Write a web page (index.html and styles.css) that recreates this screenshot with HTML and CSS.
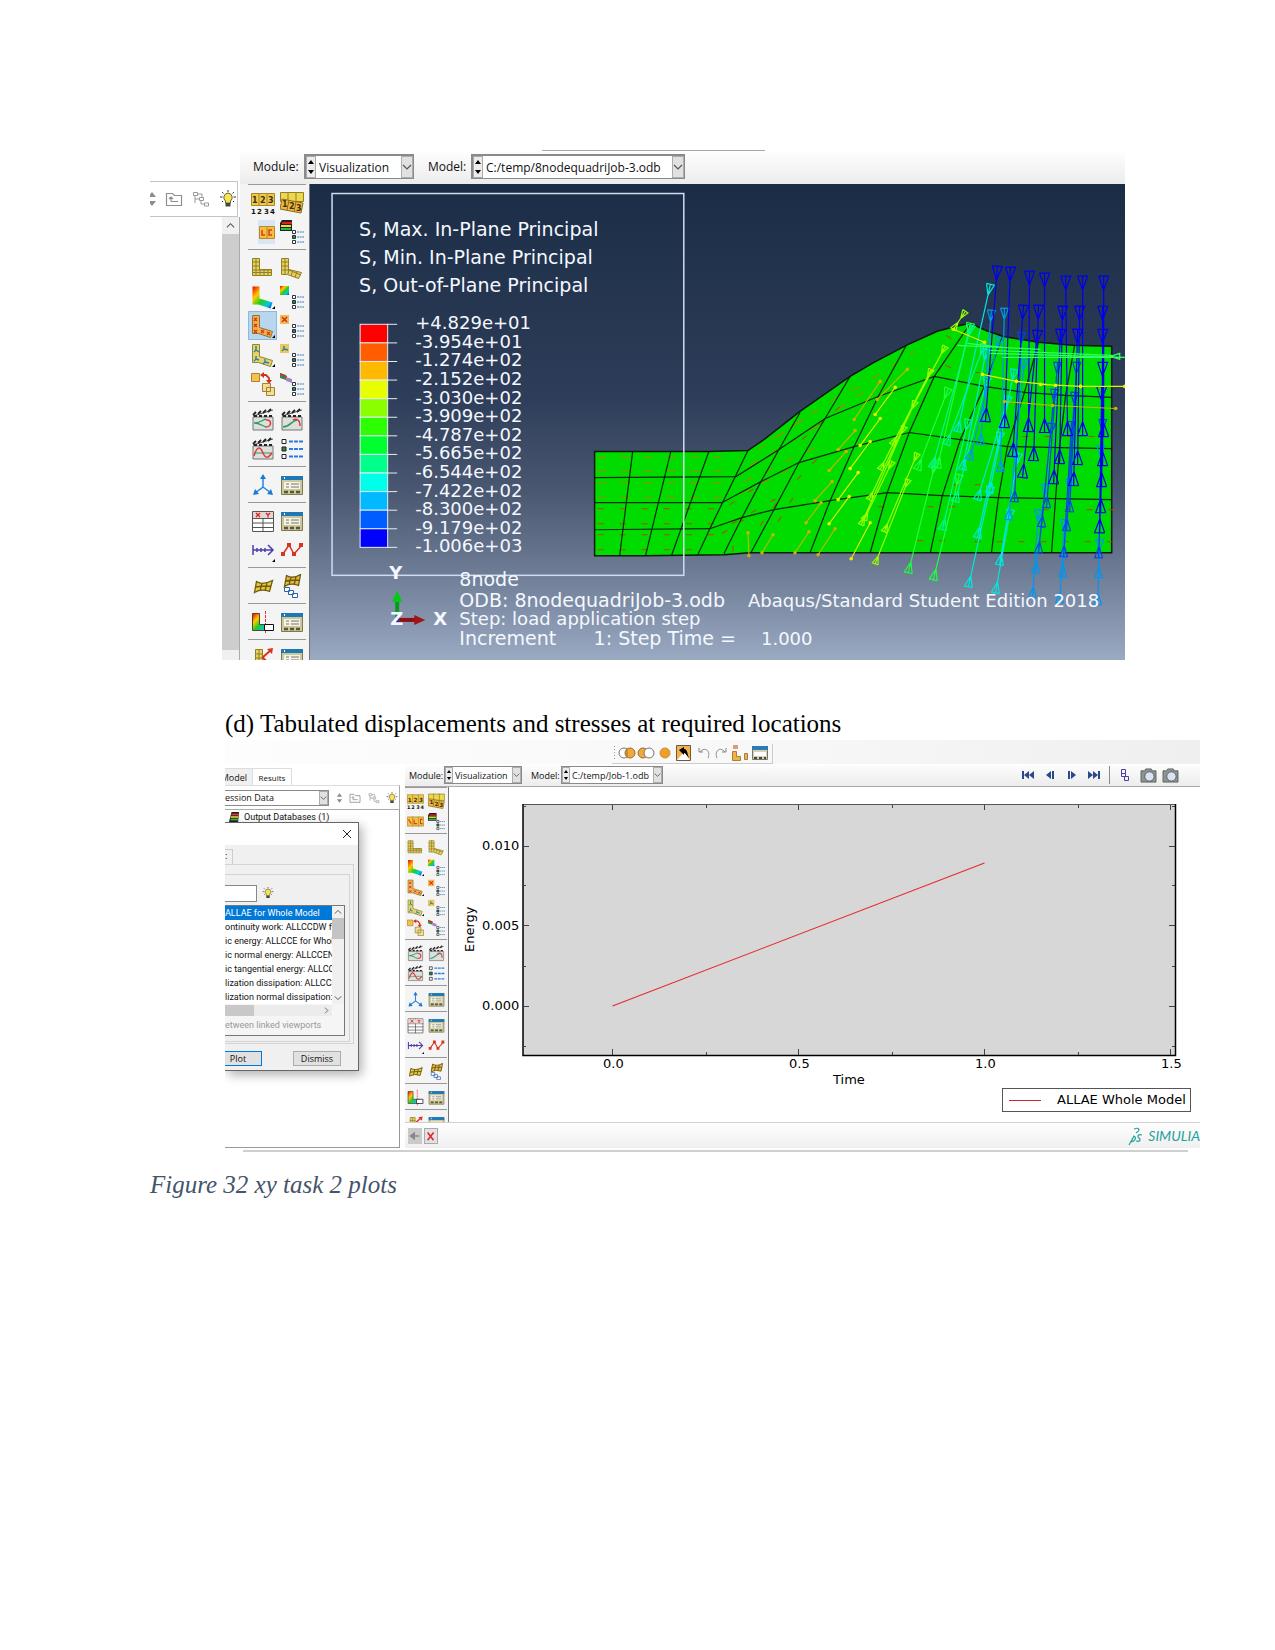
FILE: index.html
```html
<!DOCTYPE html>
<html lang="en">
<head>
<meta charset="utf-8">
<title>Figure 32 xy task 2 plots</title>
<link rel="stylesheet" href="styles.css">
</head>
<body>
<svg class="sprite" aria-hidden="true">
  <defs>
    <g id="checks">
      <path d="M12.500 10.500h3v3h-3zM12.500 20.500h3v3h-3z" fill="#fff" stroke="#333"/>
      <path d="M12.500 15.500h3v3h-3z" fill="#2a8a3a" stroke="#234"/>
      <path d="M17 12h7M17 17h7M17 22h7" stroke="#3a7ac0" stroke-dasharray="2 .6"/>
    </g>
    <path id="ell" d="M1.500 1.500h7v12l13 4-2 6-12-4h-6z"/>
    <g id="slate">
      <path d="M2 9h20v13H2z" fill="#dcdfdb" stroke="#777"/>
      <path d="M2 8l20-6" stroke="#555" stroke-width="1"/>
      <path d="M2 7l3-3M7 6l3-3M12 5l3-3M17 4l3-3M3 8h3M8 8h3M13 8h3M18 8h3" stroke="#222" stroke-width="1.800"/>
    </g>
  </defs>
  <symbol id="i-num" viewBox="0 0 24 24"><path d="M.5 2.500h23v12H.5zM8 2v13M16 2v13" fill="#f0c94a" stroke="#a8862a"/><g class="glyph"><text x="1" y="12">1</text><text x="9" y="12">2</text><text x="17" y="12">3</text></g><g class="glyph tiny"><text x="0" y="23">1</text><text x="6" y="23">2</text><text x="13" y="23">3</text><text x="19" y="23">4</text></g></symbol>
  <symbol id="i-num2" viewBox="0 0 24 24"><path d="M.5 1.500h23v9H.5zM8 1v10M16 1v10" fill="#ecd850" stroke="#94801f"/><path d="M2 8l21 4-2 10L0 18zM9 9l-2 10M16 11l-2 10" fill="#eeb93c" stroke="#8f6c1c"/><g class="glyph"><text x="2" y="16">1</text><text x="9" y="18">2</text><text x="16" y="20">3</text></g></symbol>
  <symbol id="i-lc" viewBox="0 0 24 24"><path class="halo" d="M7 0h17v24H7z"/><path d="M8.500 6.500h15v12h-15zM16 6v13" fill="#f8bd3c" stroke="#b9892c"/><path d="M11 10v5h3M21 10h-3v5h3" fill="none" stroke="#d8401c" stroke-width="1.500"/></symbol>
  <symbol id="i-slc" viewBox="0 0 24 24"><path d="M.5 5.500h23v13H.5zM8 5v14M16 5v14" fill="#f3c244" stroke="#a8862a"/><path d="M2 9l4 6M10 9v6h4M22 9h-3v6h3" fill="none" stroke="#d8401c" stroke-width="1.500"/></symbol>
  <symbol id="i-layers" viewBox="0 0 24 24"><path d="M2 0h10v11H0V3z" fill="#222"/><path d="M2 3h10" stroke="#d22" stroke-width="2"/><path d="M1 6h10" stroke="#ed3" stroke-width="2"/><path d="M1 9h10" stroke="#2b4" stroke-width="2"/><use href="#checks"/></symbol>
  <symbol id="i-mesh" viewBox="0 0 24 24"><path d="M1.500 2.500h7v11h12v6h-19zM5 2v17M1 6h8M1 10h8M1 14h20M1 16.500h20M9 13v6M13 13v6M17 13v6" fill="#e8d25c" stroke="#8f7e2b"/></symbol>
  <symbol id="i-mesh2" viewBox="0 0 24 24"><path d="M1.500 2.500h7v11l13 3-3 6-11-4h-6zM5 2v16M1 6h8M1 10h8M1 14h8l12 5M9 13l-1 5M13 14l-2 6M17 16l-2 5" fill="#e8d25c" stroke="#8f7e2b"/></symbol>
  <symbol id="i-contour" viewBox="0 0 24 24"><use href="#ell" fill="url(#rainbow)"/><path d="M24 21v3h-3z"/></symbol>
  <symbol id="i-contouro" viewBox="0 0 24 24"><path d="M0 1h9v9H0z" fill="url(#rainbow)"/><use href="#checks"/></symbol>
  <symbol id="i-sym" viewBox="0 0 24 24"><use href="#ell" fill="#f2b24a" stroke="#8f7430"/><path d="M3 4l3 3M6 4L3 7M3 10l3 3M6 10l-3 3M3 16l3 3M6 16l-3 3M10 16l3 3M13 16l-3 3M16 18l3 3M19 18l-3 3" stroke="#d3321a" stroke-width="1.300"/><path d="M24 21v3h-3z"/></symbol>
  <symbol id="i-symo" viewBox="0 0 24 24"><path d="M0 1h9v9H0z" fill="#f0bd55"/><path d="M2 3l5 5M7 3L2 8" stroke="#d3321a" stroke-width="1.600"/><use href="#checks"/></symbol>
  <symbol id="i-mat" viewBox="0 0 24 24"><use href="#ell" fill="#e3d465" stroke="#8f8440"/><path d="M5 3v4l-2 2M5 7l3 2M5 13v3l-2 2M5 16l3 1M14 16v3l-2 2M14 19l4 1" fill="none" stroke="#2f7fa8" stroke-width="1.400"/><path d="M24 21v3h-3z"/></symbol>
  <symbol id="i-mato" viewBox="0 0 24 24"><path d="M0 1h9v9H0z" fill="#ecc75a"/><path d="M4 3v3L2 8M4 6l4 1" fill="none" stroke="#2f7fa8" stroke-width="1.400"/><use href="#checks"/></symbol>
  <symbol id="i-copy" viewBox="0 0 24 24"><path d="M.5 1.500h8v8h-8z" fill="#f3c14c" stroke="#a8833a"/><path d="M10 3h5l3 3v3" fill="none" stroke="#d3321a" stroke-width="1.800"/><path d="M13 0v6l-4-3zM15 8h6l-3 4z" fill="#d3321a"/><path d="M11.500 11.500h8v8h-8zM15.500 15.500h8v8h-8z" fill="#f5dc8f" stroke="#9c8240"/></symbol>
  <symbol id="i-copyo" viewBox="0 0 24 24"><path d="M0 1l6 2v5l-6-2z" fill="#2c8a4c"/><path d="M0 1l7 3v2L0 3z" fill="#c33"/><path d="M6 5l6 2v4l-6-2z" fill="#a585c9"/><use href="#checks"/></symbol>
  <symbol id="i-clap1" viewBox="0 0 24 24"><use href="#slate"/><path d="M3 15c6 0 8-3 12-4M3 15c6 0 8 3 12 4" stroke="#2e9a62" fill="none" stroke-width="1.300"/><path d="M15 12c6-1 6 7 0 7" stroke="#dd3a3a" fill="none" stroke-width="1.500"/></symbol>
  <symbol id="i-clap2" viewBox="0 0 24 24"><use href="#slate"/><path d="M3 19c7 0 8-6 14-7" stroke="#2e9a62" fill="none" stroke-width="1.500"/><path d="M13 12c4-2 7 0 7 6" stroke="#dd3a3a" fill="none" stroke-width="1.500"/></symbol>
  <symbol id="i-clap3" viewBox="0 0 24 24"><use href="#slate"/><path d="M3 16h18" stroke="#2e9a62"/><path d="M3 19c3-10 6-10 9-3s6 4 9 0" stroke="#dd3a3a" fill="none" stroke-width="1.500"/></symbol>
  <symbol id="i-opts" viewBox="0 0 24 24"><path d="M2 2.500h4v4H2zM2 17.500h4v4H2z" fill="#fff" stroke="#222"/><path d="M2 10h4v4H2z" fill="#2a8a3a" stroke="#222"/><path d="M9 4.500h14M9 12h14M9 19.500h14" stroke="#2b7be0" stroke-width="1.800" stroke-dasharray="4 1"/></symbol>
  <symbol id="i-axes" viewBox="0 0 24 24"><path d="M12 4v10L4 20M12 14l8 6" fill="none" stroke="#2a86dc" stroke-width="1.500"/><path d="M12 1l3 5H9zM2 22l2-6 4 5zM22 22l-6-1 4-5z" fill="#1f78d4"/></symbol>
  <symbol id="i-win" viewBox="0 0 24 24"><path d="M1.500 3.500h21v18h-21z" fill="#cfc79c" stroke="#7d7856"/><path d="M1 3h22v4H1z" fill="#1e78b4"/><path d="M4 5h1" stroke="#fff" stroke-width="2"/><path d="M4 9h16v7H4z" fill="#f5f3e3"/><path d="M6 11h3M11 11h8M6 14h3M11 14h8" stroke="#777"/><path d="M4 19h4M10 19h4M16 19h4" stroke="#555a33" stroke-width="2.500"/></symbol>
  <symbol id="i-xy" viewBox="0 0 24 24"><path d="M1.500 2.500h21v20h-21zM1 9.500h22M1 14h22M1 18.500h22M12 2v21" fill="#fff" stroke="#555"/><path d="M2 3h20v6H2z" fill="#e5d6d2"/><path d="M5 4l4 4M9 4L5 8M15 4l2 2 2-2M17 6v2.500" stroke="#d22" fill="none" stroke-width="1.300"/></symbol>
  <symbol id="i-dim" viewBox="0 0 24 24"><path d="M2 7v10M2 12h19M6 10v4M10 10v4M14 10v4M17 7l5 5-5 5" stroke="#4a3fae" fill="none" stroke-width="1.500"/><path d="M24 21v3h-3z"/></symbol>
  <symbol id="i-poly" viewBox="0 0 24 24"><path d="M3 16L9 7l5 9 8-9" fill="none" stroke="#d8341f" stroke-width="1.500"/><path d="M1 14h4v4H1zM7 5h4v4H7zM12 14h4v4h-4zM19 5h4v4h-4z" fill="#d8341f"/></symbol>
  <symbol id="i-flag" viewBox="0 0 24 24"><path d="M5.500 7.500q6 4 16-1l-3 11q-8-3-15 1zM11 9l-2 8M16 9l-2 8M4 13q7-1 16-1" fill="#e6c93f" stroke="#6e5a10" stroke-width="1.300"/></symbol>
  <symbol id="i-flag2" viewBox="0 0 24 24"><path d="M6.500 1.500q6 4 14-1l-2 11q-8-3-14 1zM11 3l-2 8M16 3l-2 8M5 7q7-1 14-1" fill="#e8b93f" stroke="#6e5a10" stroke-width="1.300"/><path d="M4.500 13.500h5v4h-5zM8.500 16.500h5v4h-5zM12.500 19.500h5v4h-5z" fill="#fff" stroke="#2b5fb0"/></symbol>
  <symbol id="i-cut" viewBox="0 0 24 24"><path d="M1.500 3.500h7v11h9v6h-16z" fill="url(#rainbow)" stroke="#543"/><path d="M14.500 1v22" stroke="#e33" stroke-dasharray="3 1"/><path d="M13.500 14.500h9v6h-9z" fill="#fff" stroke="#111"/></symbol>
  <symbol id="i-pick" viewBox="0 0 24 24"><path d="M4.500 3.500h7v14h-7zM8 3v15M4 8h8M4 12h8" fill="#e8d25c" stroke="#8f7e2b"/><path d="M11 12l9-8M12 12l9 8" stroke="#d8341f" stroke-width="2"/><path d="M22 2l-1 6-5-5z" fill="#d8341f"/></symbol>
  <symbol id="i-spin" viewBox="0 0 8 18"><path d="M4 2l4 5H0zM4 16l4-5H0z" fill="#8c8c8c"/></symbol>
  <symbol id="i-folder" viewBox="0 0 18 18"><path d="M1.500 3.500h6l2 2h7v10h-15zM13 11.500H6M6 11.500v-4M4 9l2-2 2 2" fill="none" stroke="#8f8f8f" stroke-width="1.200"/></symbol>
  <symbol id="i-tree" viewBox="0 0 18 18"><path d="M1.500 2.500h4v3h-4zM7.500 7.500h4v3h-4zM12.500 13h4v3h-4zM3 6v7M3 9h4M9 11v3h3M6 4h4v3" fill="none" stroke="#999"/></symbol>
  <symbol id="i-bulb" viewBox="0 0 18 18"><path d="M9 3a4.500 4.500 0 0 1 2.500 8v2h-5v-2A4.500 4.500 0 0 1 9 3z" fill="#f3e45a" stroke="#6d6420"/><path d="M6.500 13h5v3.500h-5z" fill="#3d4a44"/><path d="M9 0v2M1 7h2.500M14.500 7H17M3 2l1.500 1.500M15 2l-1.500 1.500M3 12l1-1M15 12l-1-1" stroke="#333"/></symbol>
  <symbol id="i-updown" viewBox="0 0 8 20"><path d="M4 3l3 4H1zM4 17l3-4H1z"/></symbol>
  <symbol id="i-chev" viewBox="0 0 10 10"><path d="M1 3l4 4 4-4" fill="none" stroke="#555" stroke-width="1.200"/></symbol>
  <symbol id="i-first" viewBox="0 0 14 12"><path d="M1 2h2v8H1zM8 2v8L3 6zM13 2v8L8 6z" fill="#2c4a8a"/></symbol>
  <symbol id="i-prev" viewBox="0 0 14 12"><path d="M8 2v8L3 6zM9 2h2v8H9z" fill="#2c4a8a"/></symbol>
  <symbol id="i-camera" viewBox="0 0 18 16"><path d="M1 3h4l1-2h6l1 2h4v12H1z" fill="#8d9590" stroke="#5b625e"/><circle cx="10" cy="9" r="5" fill="#d9e3f3" stroke="#556"/></symbol>
</svg>

<main class="page">
  <figure class="shot stress">
    <div class="side">
      <div class="side-tools">
        <svg class="spin"><use href="#i-spin"/></svg>
        <svg class="ic"><use href="#i-folder"/></svg>
        <svg class="ic"><use href="#i-tree"/></svg>
        <svg class="ic"><use href="#i-bulb"/></svg>
      </div>
      <div class="side-tree"><div class="vscroll"><svg class="up"><use href="#i-chev"/></svg></div></div>
    </div>
    <div class="work">
      <div class="module-bar">
        <label for="module-a">Module:</label>
        <span class="combo combo-module"><svg class="ud"><use href="#i-updown"/></svg><select id="module-a"><option>Visualization</option></select><svg class="dd"><use href="#i-chev"/></svg></span>
        <label for="model-a">Model:</label>
        <span class="combo combo-model"><svg class="ud"><use href="#i-updown"/></svg><select id="model-a"><option>C:/temp/8nodequadriJob-3.odb</option></select><svg class="dd"><use href="#i-chev"/></svg></span>
      </div>
      <div class="body">
        <div class="toolbox" data-load="i-lc" data-active="i-sym"></div>
        <svg class="view" viewBox="309 185 816 475" preserveAspectRatio="xMinYMin slice" role="img" aria-label="Principal stress plot">
          <defs>
            <linearGradient id="sky" x1="0" y1="0" x2="0" y2="1"><stop offset="0" stop-color="#1b2d46"/><stop offset=".45" stop-color="#2e3d59"/><stop offset=".65" stop-color="#4a5872"/><stop offset=".8" stop-color="#6a7891"/><stop offset="1" stop-color="#9aaac2"/></linearGradient>
            <linearGradient id="rainbow" x1="0" y1="0" x2="1" y2="1"><stop offset="0" stop-color="#e00"/><stop offset=".3" stop-color="#fc0"/><stop offset=".55" stop-color="#2c2"/><stop offset=".8" stop-color="#0cd"/><stop offset="1" stop-color="#22d"/></linearGradient>
          </defs>
          <rect x="309" y="184" width="816" height="476" fill="url(#sky)"/>
          <path d="M593 452H706L746 451L762 440L798 412L848 377L870 364L904 346L935 332L954 327L968 324L983 331L1000 337L1036 343L1070 346L1109 347V553H747L723 555L642 556H593z" fill="#00dc00" stroke="#0a1a0a" stroke-width="1.500"/>
          <g class="hatch">
            <path class="h1" d="M596 458H735M596 472H733M596 483H728M596 498H720"/>
            <path class="h2" d="M596 509H720M596 524H712M596 535H712M596 550H705"/>
            <path class="h1" d="M756 450L810 414M748 466L820 424M742 482L822 444M738 494L800 464M770 440L850 388M850 392L912 352M836 410L880 380"/>
            <path class="h2" d="M728 505L765 480M730 524L776 498M758 526L780 496M776 522L796 490M720 534L742 520M731 552V540M795 480L826 448M800 440L846 400"/>
            <path class="h2" d="M926 368L932 370M944 336L950 340M943 366L952 370M973 373H977M876 507H896M925 507H956M915 541H945M972 542H1110M1020 437H1105M1040 510H1112M950 485H980"/>
          </g>
          <g class="mesh">
            <path d="M631 452L618 556M669 452L644 555M707 452L670 555M746 451L708 529L696 555M798 413L777 450L759 482L740 518L722 554M848 377L823 419L797 463L772 510L749 553M904 346L876 397L852 447L828 501L808 553M968 324L932 377L907 433L885 493L868 553M1000 337L982 387L958 440L940 496L928 553M1036 343L1022 393L1005 447L996 498L989 553M1072 346L1063 396L1057 448L1053 499L1049 553"/>
            <path d="M593 478L734 477L777 450L823 419L876 397L932 377L982 387L1022 393L1063 396L1109 398M593 503L720 503L759 482L797 463L852 447L907 433L958 440L1005 447L1057 448L1109 449M593 530L708 529L740 518L772 510L828 501L885 493L940 496L996 498L1053 499L1109 500"/>
          </g>
          <g id="vectors"></g>
          <rect class="frame" x="331" y="194.500" width="351" height="381"/>
          <g id="legend"></g>
          <g class="vtext large"><text x="358" y="237">S, Max. In-Plane Principal</text><text x="358" y="265">S, Min. In-Plane Principal</text><text x="358" y="293">S, Out-of-Plane Principal</text></g>
          <g class="vtext large"><text x="458" y="586">8node</text><text x="458" y="607">ODB: 8nodequadriJob-3.odb</text><text x="458" y="645">Increment</text><text x="592" y="645">1: Step Time =</text></g>
          <g class="vtext"><text x="746" y="607">Abaqus/Standard Student Edition 2018</text><text x="458" y="625">Step: load application step</text><text x="759" y="645">1.000</text></g>
          <path d="M396 600v20" stroke="#0a9a1c" stroke-width="4"/><path d="M396 591l5 11h-10z" fill="#0c1"/>
          <path d="M398 620h18" stroke="#8d1016" stroke-width="4"/><path d="M424 620l-11-5v10z" fill="#a0141a"/><path d="M392 622l6-6v6z" fill="#22b"/>
          <g class="vtext axis"><text x="388" y="579">Y</text><text x="432" y="625">X</text><text x="389" y="625">Z</text></g>
        </svg>
      </div>
    </div>
  </figure>

  <p class="item">(d) Tabulated displacements and stresses at required locations</p>

  <figure class="shot energy">
    <div class="top-strip">
      <div class="mini-tools">
        <svg viewBox="0 0 160 18" class="mini">
          <path d="M2.500 2v15" stroke="#999" stroke-dasharray="1 2"/>
          <circle cx="12" cy="9" r="5" fill="#fff" stroke="#777"/><circle cx="18" cy="9" r="5" fill="#f0a93a" stroke="#97702c"/><path d="M15 5v8" stroke="#97702c"/>
          <circle cx="31" cy="9" r="5" fill="#f0a93a" stroke="#97702c"/><circle cx="37" cy="9" r="5" fill="#fff" stroke="#777"/>
          <circle cx="53" cy="9" r="5" fill="#ef9d2b" stroke="#c99143"/>
          <path d="M64.500 1.500h14v15h-14z" fill="#f6b04c" stroke="#6a5a40"/><path d="M65 16l7-8 6 8z" fill="#fff"/><path d="M67 6l5-3v2c3 0 3 3 5 9-3-4-4-5-5-5v2z"/>
          <path d="M87 4v4h4M88 8c5-6 11-1 8 6M114 4v4h-4M113 8c-5-6-11-1-8 6" fill="none" stroke="#888"/>
          <path d="M121 1h5v4h-5z" fill="#e09a7a"/><path d="M120.500 7.500h4v5h4v4h-8zM132.500 9.500h3v6h-3z" fill="#f0b04a" stroke="#a8803a"/>
          <path d="M140.500 2.500h15v13h-15z" fill="#d8d2aa" stroke="#777"/><path d="M140 2h16v4h-16z" fill="#2a7cba"/><path d="M142 8h12v4h-12z" fill="#fff"/><path d="M142 14h3M147 14h3M152 14h2" stroke="#444" stroke-width="2"/>
        </svg>
      </div>
    </div>
    <div class="columns">
      <div class="side">
        <div class="tabs"><button type="button" class="tab"><span>Model</span></button><button type="button" class="tab on">Results</button></div>
        <div class="side-tools">
          <span class="combo combo-data"><select aria-label="Data"><option>ession Data</option></select><svg class="dd"><use href="#i-chev"/></svg></span>
          <svg class="spin"><use href="#i-spin"/></svg>
          <svg class="ic"><use href="#i-folder"/></svg>
          <svg class="ic"><use href="#i-tree"/></svg>
          <svg class="ic"><use href="#i-bulb"/></svg>
        </div>
        <div class="side-tree">
          <div class="node"><svg viewBox="0 0 12 12"><path d="M3 0h9l-1 12H0z" fill="#222"/><path d="M3 3h9" stroke="#e33" stroke-width="2"/><path d="M2 6h9" stroke="#ec3" stroke-width="2"/><path d="M2 9h9" stroke="#3b5" stroke-width="2"/></svg>Output Databases (1)</div>
          <div class="dialog">
            <div class="dialog-title"><button type="button" class="close" aria-label="Close"><svg viewBox="0 0 8 8"><path d="M0 0l8 8M8 0L0 8" stroke="#222"/></svg></button></div>
            <div class="dialog-tab">:</div>
            <div class="dialog-page">
              <div class="group">
                <div class="filter"><input type="text" aria-label="Name filter"><svg class="ic"><use href="#i-bulb"/></svg></div>
                <div class="listbox">
                  <div class="list-main">
                    <ul>
                      <li class="sel">ALLAE for Whole Model</li>
                      <li>ontinuity work: ALLCCDW fo</li>
                      <li>ic energy: ALLCCE for Whole</li>
                      <li>ic normal energy: ALLCCEN</li>
                      <li>ic tangential energy: ALLCCE</li>
                      <li>lization dissipation: ALLCCSD</li>
                      <li>lization normal dissipation: A</li>
                    </ul>
                    <div class="vbar"><svg class="up"><use href="#i-chev"/></svg><i></i><svg><use href="#i-chev"/></svg></div>
                  </div>
                  <div class="hbar"><i></i><svg><use href="#i-chev"/></svg></div>
                  <div class="linked">etween linked viewports</div>
                </div>
              </div>
            </div>
            <div class="dialog-actions"><button type="button" class="btn primary">Plot</button><button type="button" class="btn">Dismiss</button></div>
          </div>
        </div>
      </div>
      <div class="work">
        <div class="module-bar">
          <label for="module-b">Module:</label>
          <span class="combo combo-module"><svg class="ud"><use href="#i-updown"/></svg><select id="module-b"><option>Visualization</option></select><svg class="dd"><use href="#i-chev"/></svg></span>
          <label for="model-b">Model:</label>
          <span class="combo combo-model"><svg class="ud"><use href="#i-updown"/></svg><select id="model-b"><option>C:/temp/Job-1.odb</option></select><svg class="dd"><use href="#i-chev"/></svg></span>
          <div class="player">
            <svg><use href="#i-first"/></svg><svg><use href="#i-prev"/></svg><svg class="flip"><use href="#i-prev"/></svg><svg class="flip"><use href="#i-first"/></svg>
            <span class="rule"></span>
            <svg viewBox="0 0 12 14"><path d="M2.500 1.500h4v4h-4zM2.500 5.500h4v3h-4zM5.500 8.500h4v4h-4z" fill="none" stroke="#4a3f9e"/></svg>
            <svg class="cam"><use href="#i-camera"/></svg><svg class="cam"><use href="#i-camera"/></svg>
          </div>
        </div>
        <div class="body">
          <div class="toolbox" data-load="i-slc"></div>
          <svg class="view" viewBox="449 788 751 335" preserveAspectRatio="xMinYMin meet" role="img" aria-label="Energy over time">
            <rect x="523" y="805.500" width="652.500" height="251" fill="#d7d7d7"/>
            <path d="M523 805.500H1175.500" stroke="#555"/>
            <path d="M523 805V1056.500H1175.500V805" fill="none" stroke="#000" stroke-width="1.500"/>
            <path id="ticks" fill="none" stroke="#444"/>
            <path d="M612.500 1007L984.500 864" stroke="#e8262e" stroke-width="1.100"/>
            <g class="ctext"><text x="482" y="851">0.010</text><text x="482" y="931">0.005</text><text x="482" y="1011">0.000</text>
            <text x="603" y="1069">0.0</text><text x="789" y="1069">0.5</text><text x="975" y="1069">1.0</text><text x="1161" y="1069">1.5</text><text x="833" y="1085">Time</text>
            <text transform="translate(474 953) rotate(-90)">Energy</text><text x="1057" y="1105">ALLAE Whole Model</text></g>
            <rect x="1002.500" y="1089.500" width="188" height="23" fill="none" stroke="#555"/>
            <path d="M1009 1101.500h32" stroke="#c22a2e"/>
          </svg>
        </div>
        <div class="status">
          <button type="button" class="st" aria-label="Back"><svg viewBox="0 0 14 14"><path d="M2 7h10M2 7l4-3v6z" stroke="#888" stroke-width="2" fill="#888"/></svg></button>
          <button type="button" class="st cancel" aria-label="Cancel"><svg viewBox="0 0 14 14"><path d="M3 3l7 9M10 3l-7 9" stroke="#e02430" stroke-width="1.800"/></svg></button>
          <span class="brand"><svg viewBox="0 0 16 18"><path d="M6 2c5-2 7 1 2 4M5 9c4 0 3 5-2 6l3-6-5 9M14 8c-4-1-5 1-3 3s1 4-3 3" fill="none" stroke="#27a09a" stroke-width="1.200"/></svg>SIMULIA</span>
        </div>
      </div>
    </div>
    <div class="base-line"></div>
  </figure>

  <p class="caption">Figure 32 xy task 2 plots</p>
</main>
<script src="app.js"></script>
</body>
</html>
```
FILE: styles.css
```css
* { box-sizing: border-box; }
body { margin: 0; background: #fff; color: #000; font-family: "Liberation Serif", serif; }
.page { padding: 149px 150px 80px; min-height: 100vh; }
figure, p, ul { margin: 0; padding: 0; }
svg { display: block; flex: none; }
.sprite { display: none; }
button, select, input { font: inherit; color: inherit; margin: 0; padding: 0; border: 0; background: none; border-radius: 0; }

.item { margin: 48px 0 0 75px; font-size: 25px; line-height: 32px; }
.caption { margin-top: 17px; font-size: 25px; line-height: 32px; font-style: italic; color: #44546a; }

.shot { display: flex; font-family: "Open Sans", "Noto Sans", sans-serif; overflow: hidden; color: #111; }
.work { flex: 1; min-width: 0; display: flex; flex-direction: column; }
.body { flex: 1; min-height: 0; display: flex; }
.view { flex: 1; min-width: 0; }

.glyph text { font: bold 8px "DejaVu Sans", sans-serif; fill: #3a3216; }
.glyph.tiny text { font-size: 7px; fill: #111; }
.halo { fill: #d8e6f4; }

.module-bar { display: flex; align-items: center; background: linear-gradient(#fefefe, #ececec); }
.combo { display: flex; align-items: stretch; background: #fff; border: 1px solid #8a8a8a; }
.combo select { flex: 1; min-width: 0; appearance: none; white-space: nowrap; }
.ud { background: #ececec; border: 1px solid #aaa; }
.dd { background: #e1e1e1; border: 1px solid #adadad; }

.toolbox { background: #f4f4f4; border-right: 1px solid #777; overflow: hidden; flex: none; }
.tool-group { display: grid; border-top: 1px solid #999; }
.tool { display: flex; align-items: center; justify-content: center; }
.tool.active { background: #b9d6f0; box-shadow: inset 0 0 0 1px #8fb8de; }

/* stress plot */
.stress { height: 511px; font-size: 12px; }
.stress .side { width: 90px; display: flex; flex-direction: column; padding-top: 32px; }
.stress .side-tools { height: 36px; display: flex; align-items: center; gap: 9px; border: 1px solid #c4c4c4; border-width: 1px 1px 1px 0; margin-right: 2px; overflow: hidden; }
.stress .side-tools .spin { width: 8px; height: 18px; margin-left: -2px; }
.stress .side-tools .ic { width: 18px; height: 18px; }
.stress .side-tree { flex: 1; display: flex; justify-content: flex-end; border-right: 1px solid #aaa; }
.vscroll { width: 17px; background: #cdcdcd; border-bottom: 10px solid #f0f0f0; }
.vscroll .up { width: 17px; height: 17px; padding: 4px; background: #f0f0f0; }
.up { transform: rotate(180deg); }
.stress .module-bar { height: 35px; padding: 0 13px; background: linear-gradient(#a8a8a8, #a8a8a8) 302px 1px / 223px 1px no-repeat, linear-gradient(#fff, #ececec); }
.stress .combo { height: 25px; border-width: 2px 1px 1px 2px; }
.stress .combo-module { width: 110px; margin: 0 14px 0 7px; }
.stress .combo-model { width: 214px; margin-left: 5px; }
.stress .module-bar label { width: 44px; }
.stress .module-bar .combo-module + label { width: 38px; }
.stress .ud { width: 10px; height: 22px; }
.stress .dd { width: 12px; height: 22px; }
.stress .combo select { padding-left: 3px; }
.stress .toolbox { width: 70px; padding: 0 3px 0 8px; }
.stress .tool-group { grid-template-columns: 29px 29px; grid-auto-rows: 29px; padding: 3px 0; }
.stress .tool svg { width: 24px; height: 24px; }

.frame { fill: none; stroke: #cfdcf0; stroke-width: 1.5; }
.mesh path { fill: none; stroke: #06290a; stroke-width: 1.2; }
.hatch path { fill: none; stroke-width: 1; stroke-dasharray: 9 14; }
.hatch .h1 { stroke: #a08a00; }
.hatch .h2 { stroke: #b04a00; stroke-dasharray: 6 16; }
.vtext text { font: 18px "DejaVu Sans", sans-serif; fill: #f4f8ff; }
.vtext.large text { font-size: 19px; }
.vtext.axis text { font-weight: bold; }

/* energy plot */
.energy { flex-direction: column; margin: 0 -75px 0 75px; font-size: 9px; }
.top-strip { height: 24px; display: flex; justify-content: center; background: linear-gradient(90deg, #fdfdfd, #f7f7f7 60%, #efefef); }
.mini-tools { margin: 4px 0 0 -40px; border-bottom: 1px solid #ccc; border-right: 1px solid #ccc; }
.mini { width: 160px; height: 18px; }
.columns { display: flex; height: 384px; }
.energy .side { width: 175px; display: flex; flex-direction: column; margin-right: 5px; overflow: hidden; border-bottom: 1px solid #999; }
.tabs { display: flex; height: 21px; padding-top: 4px; }
.tab { background: #f0f0f0; width: 27px; overflow: hidden; border-top: 1px solid #ddd; display: flex; justify-content: flex-end; align-items: center; padding-right: 5px; }
.tab.on { width: 40px; background: #fff; border: 1px solid #ddd; border-bottom: 0; padding: 0; justify-content: center; font-size: 8px; }
.energy .side-tools { height: 25px; display: flex; align-items: center; justify-content: space-between; border: 1px solid #aaa; border-left: 0; border-top-color: #ddd; padding-right: 1px; }
.combo-data { width: 104px; height: 16px; border-left: 0; }
.energy .spin { width: 7px; height: 12px; }
.energy .ic { width: 12px; height: 12px; }
.energy .side-tree { flex: 1; position: relative; border-right: 1px solid #999; }
.node { display: flex; align-items: center; gap: 4px; height: 14px; padding-left: 3px; font-family: Roboto, sans-serif; }
.node svg { width: 12px; height: 10px; }
.dialog { position: absolute; left: 0; top: 12px; width: 134px; height: 249px; background: #f0f0f0; border: 1px solid #666; border-left: 0; box-shadow: 3px 4px 10px rgba(0, 0, 0, .3); }
.dialog-title { height: 22px; background: #fff; display: flex; justify-content: flex-end; padding: 6px 7px; }
.close svg { width: 8px; height: 8px; }
.dialog-tab { width: 8px; height: 15px; margin-top: 4px; border: 1px solid #ccc; border-width: 1px 1px 0 0; line-height: 12px; }
.dialog-page { border: 1px solid #d4d4d4; border-left: 0; margin-right: 4px; padding: 9px 3px 0 0; height: 180px; }
.group { border: 1px solid #d4d4d4; border-left: 0; padding: 9px 4px 0 0; height: 168px; }
.filter { display: flex; align-items: center; gap: 5px; height: 18px; }
.filter input { width: 32px; height: 17px; background: #fff; border: 1px solid #888; border-left: 0; }
.listbox { margin-top: 3px; border: 1px solid #777; border-left: 0; background: #f5f5f5; font-family: Roboto, sans-serif; }
.list-main { display: flex; background: #fff; }
.list-main ul { flex: 1; min-width: 0; list-style: none; overflow: hidden; }
.list-main li { height: 14px; line-height: 14px; white-space: nowrap; }
.list-main .sel { background: #0078d7; color: #fff; }
.vbar { width: 12px; background: #f0f0f0; display: flex; flex-direction: column; }
.vbar svg { width: 12px; height: 12px; padding: 2px; }
.vbar i { height: 21px; background: #c4c4c4; margin-bottom: auto; }
.hbar { display: flex; height: 11px; margin: 1px 12px 0 0; background: #ececec; }
.hbar i { width: 29px; background: #c8c8c8; margin-right: auto; }
.hbar svg { width: 11px; height: 11px; padding: 2px; transform: rotate(-90deg); }
.linked { height: 19px; line-height: 18px; color: #999; white-space: nowrap; }
.dialog-actions { display: flex; justify-content: space-between; padding: 7px 17px 0 0; }
.btn { height: 15px; width: 48px; background: #e1e1e1; border: 1px solid #adadad; line-height: 12px; }
.btn.primary { width: 37px; border: 1px solid #0078d7; border-left: 0; padding-right: 10px; }

.energy .module-bar { height: 23px; padding: 0 24px 0 4px; border-bottom: 1px solid #aaa; }
.energy .combo { flex: none; }
.energy .module-bar .combo { height: 18px; border-width: 1px; }
.energy .module-bar label { width: 31px; }
.energy .module-bar .combo-module + label { width: 27px; }
.energy .combo-module { width: 78px; margin: 0 9px 0 4px; }
.energy .combo-model { width: 102px; margin-left: 3px; }
.energy .ud { width: 8px; height: 16px; }
.energy .dd { width: 9px; height: auto; }
.energy .combo select { padding-left: 2px; }
.energy .combo-data select { padding-left: 0; }
.player { margin-left: auto; display: flex; align-items: center; gap: 8px; }
.player svg { width: 14px; height: 14px; }
.player .cam { width: 17px; height: 15px; margin-right: -3px; }
.flip { transform: scaleX(-1); }
.rule { width: 1px; height: 18px; background: #888; }
.energy .toolbox { width: 44px; padding-right: 1px; }
.energy .tool-group { grid-template-columns: 21px 21px; grid-auto-rows: 20px; padding: 3px 0 2px; }
.energy .tool svg { width: 17px; height: 17px; }
.ctext text { font: 13px "DejaVu Sans", sans-serif; fill: #000; }
.status { height: 26px; flex: none; display: flex; align-items: center; gap: 2px; padding-left: 3px; border-top: 1px solid #d0d0d0; background: linear-gradient(#fefefe, #efefef); }
.st { width: 14px; height: 16px; background: #cacaca; }
.st.cancel { background: #e2e2e2; border: 1px solid #aaa; }
.st svg { width: 12px; height: 14px; margin: auto; }
.brand { margin-left: auto; display: flex; align-items: center; gap: 4px; font: italic 14px Lato, sans-serif; color: #27a09a; }
.brand svg { width: 16px; height: 18px; }
.base-line { height: 2px; margin: 2px 12px 0 18px; background: #cfcfcf; }
```
FILE: app.js
```js
const NS = "http://www.w3.org/2000/svg";

function el(name, attrs, parent) {
  const node = document.createElementNS(NS, name);
  for (const key in attrs) node.setAttribute(key, attrs[key]);
  parent.appendChild(node);
  return node;
}

// Toolbox: groups of tools, two per row
document.querySelectorAll(".toolbox").forEach((box) => {
  const groups = [
    ["i-num", "i-num2", box.dataset.load, "i-layers"],
    ["i-mesh", "i-mesh2", "i-contour", "i-contouro", "i-sym", "i-symo", "i-mat", "i-mato", "i-copy", "i-copyo"],
    ["i-clap1", "i-clap2", "i-clap3", "i-opts"],
    ["i-axes", "i-win"],
    ["i-xy", "i-win", "i-dim", "i-poly"],
    ["i-flag", "i-flag2"],
    ["i-cut", "i-win"],
    ["i-pick", "i-win"]
  ];
  groups.forEach((ids) => {
    const group = document.createElement("div");
    group.className = "tool-group";
    ids.forEach((id) => {
      const button = document.createElement("button");
      button.type = "button";
      button.className = id === box.dataset.active ? "tool active" : "tool";
      button.setAttribute("aria-label", id.slice(2));
      el("use", { href: "#" + id }, el("svg", {}, button));
      group.appendChild(button);
    });
    box.appendChild(group);
  });
});

// Contour legend
const legend = document.getElementById("legend");
const colors = ["#ff0000", "#ff5d00", "#ffb900", "#e8ff00", "#8bff00", "#2eff00", "#00ff2e", "#00ff8b", "#00ffe8", "#00b9ff", "#005dff", "#0000ff"];
const values = ["+4.829e+01", "-3.954e+01", "-1.274e+02", "-2.152e+02", "-3.030e+02", "-3.909e+02", "-4.787e+02", "-5.665e+02", "-6.544e+02", "-7.422e+02", "-8.300e+02", "-9.179e+02", "-1.006e+03"];
const step = 18.55;
colors.forEach((fill, i) => {
  el("rect", { x: 359, y: 325 + i * step, width: 27.5, height: step, fill, stroke: "#e4ecf8" }, legend);
});
const labels = el("g", { class: "vtext" }, legend);
values.forEach((value, i) => {
  const y = 325 + i * step;
  el("path", { d: `M386 ${y}h10`, stroke: "#e4ecf8" }, legend);
  el("text", { x: 414, y: y + 5 }, labels).textContent = value;
});

// Principal stress vectors: x1, y1, x2, y2; arrowheads point inwards
const B = "#0000f0", M = "#0046e6", L = "#0096f0", C = "#00e6dc", T = "#00f596", G = "#1eff3c", Y = "#96ff00", W = "#e6f000", O = "#c8b400";
const vectors = [
  [G, 4, [[933,463,906,573],[957,475,931,580],[946,389,915,470],[968,324,935,468]]],
  [Y, 3, [[963,312,951,330],[943,347,890,445],[929,370,878,470],[913,402,867,500],[902,427,859,525],[915,454,882,532],[906,480,873,564],[890,462,862,520]]],
  [T, 4, [[969,326,930,468],[982,345,944,445],[985,378,953,502],[966,420,940,530]]],
  [C, 4, [[988,285,955,432],[984,350,960,470],[1006,397,975,500],[998,433,975,538],[1016,454,997,565],[988,487,966,587],[1008,510,993,593],[1012,370,987,493]]],
  [L, 4, [[989,311,978,445],[997,338,967,460],[1002,309,998,472],[1022,360,1006,520],[1043,485,1033,573],[1036,510,1030,598],[1067,480,1060,577],[1062,520,1057,603],[1098,446,1096,578],[1097,540,1095,605]]],
  [M, 4, [[1019,333,1012,502],[1052,390,1039,527],[1049,424,1036,553],[1072,393,1064,531],[1069,422,1061,557],[1100,420,1096,558],[1055,363,1044,508],[1074,363,1067,512]]],
  [B, 5, [[995,267,983,422],[1008,268,1002,428],[1027,272,1026,432],[1042,274,1042,433],[1063,277,1065,436],[1080,277,1080,436],[1101,277,1101,437],[1021,306,1010,457],[1036,306,1031,461],[1060,307,1057,464],[1077,307,1075,465],[1100,307,1100,466],[1035,331,1020,478],[1058,330,1051,484],[1075,330,1071,486],[1100,330,1099,487],[1100,363,1098,513],[1099,387,1097,533]]]
];
const field = document.getElementById("vectors");
function triangle(x1, y1, x2, y2, half) {
  const len = Math.hypot(x2 - x1, y2 - y1), ux = (x2 - x1) / len, uy = (y2 - y1) / len, h = half * 2.8;
  const a = `${x1 - uy * half} ${y1 + ux * half}`, b = `${x1 + uy * half} ${y1 - ux * half}`;
  return `M${a}L${b}L${x1 + ux * h} ${y1 + uy * h}L${a}`;
}
vectors.forEach(([stroke, half, list]) => {
  const d = list.map(([a, b, c, e]) => `M${a} ${b}L${c} ${e}` + triangle(a, b, c, e, half) + triangle(c, e, a, b, half)).join("");
  el("path", { d, stroke, fill: "none", "stroke-width": 1.2 }, field);
});

// Small vectors with dot ends
const small = [
  [O, [[878,382,852,420],[905,370,875,400],[853,431,836,450],[844,452,827,471],[830,482,813,501],[819,503,804,523],[807,532,793,553],[771,535,760,553],[746,533,747,556],[833,529,816,555],[1002,402,1050,406],[1050,406,1113,409]]],
  [W, [[893,388,873,415],[878,419,858,446],[868,442,848,469],[856,473,836,500],[847,497,827,524],[868,523,849,559],[951,330,982,343],[980,375,1014,382],[1014,382,1053,386],[1038,385,1078,387],[1078,387,1122,387]]]
];
small.forEach(([color, list]) => {
  el("path", { d: list.map(([a, b, c, e]) => `M${a} ${b}L${c} ${e}`).join(""), stroke: color, "stroke-width": 1.1 }, field);
  list.forEach(([a, b, c, e]) => {
    el("circle", { cx: a, cy: b, r: 1.8, fill: color }, field);
    el("circle", { cx: c, cy: e, r: 1.8, fill: color }, field);
  });
});
el("path", { d: "M955 346L1038 350M965 344L1000 348M988 351L1109 356M988 354L1125 358M1000 358H1109M1117 354l-9 3 9 3z", stroke: "#32ff64", fill: "none", "stroke-width": 1.2 }, field);

// Chart ticks on all four sides
let ticks = "";
[612.5, 798.5, 984.5, 1170.5].forEach((x) => { ticks += `M${x} 1056v-6M${x} 806v5`; });
[706.5, 892.5, 1078.5].forEach((x) => { ticks += `M${x} 1056v-3M${x} 806v3`; });
[847.5, 926.5, 1007.5].forEach((y) => { ticks += `M523 ${y}h6M1175 ${y}h-6`; });
[807.5, 886.5, 967.5, 1047.5].forEach((y) => { ticks += `M523 ${y}h3M1175 ${y}h-3`; });
document.getElementById("ticks").setAttribute("d", ticks);
```
